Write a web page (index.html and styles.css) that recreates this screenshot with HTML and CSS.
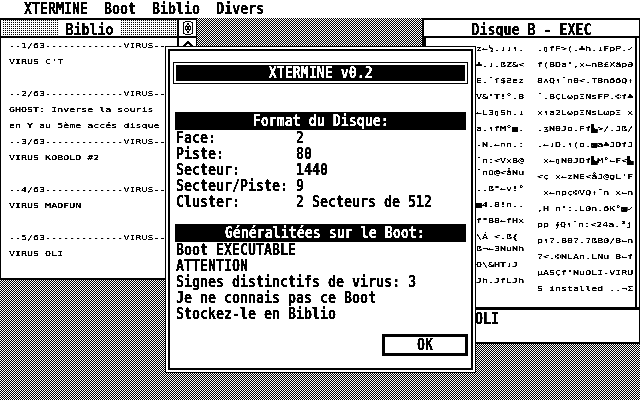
FILE: index.html
```html
<!DOCTYPE html>
<html lang="fr">
<head>
  <meta charset="UTF-8" />
  <title>XTERMINE v0.2</title>
  <link rel="stylesheet" href="styles.css">
</head>
<body>
  <div class="screen">
    <div class="menubar big">
      <span class="menu m-xtermine">XTERMINE</span>
      <span class="menu m-boot">Boot</span>
      <span class="menu m-biblio">Biblio</span>
      <span class="menu">Divers</span>
    </div>

    <div class="window biblio">
      <div class="titlebar">
        <div class="title-pattern"><div class="title-box big"><div class="line">Biblio</div></div></div>
        <div class="widget">
          <svg width="10" height="14" viewBox="0 0 10 14"><path d="M2 .5h6l1.500 1.500v10l-1.500 1.500h-6l-1.500-1.500v-10zM5 2.500l-3 4.500 3 4.500 3-4.500z" fill="none" stroke="#000"/><path d="M5 4.500l-1.500 2.500 1.500 2.500 1.500-2.500z" fill="#000"/></svg>
        </div>
      </div>
      <div class="biblio-body">
        <div class="list small">
          <div class="line">--1/63-------------VIRUS--</div>
          <div class="line">VIRUS C'T</div>
          <div class="line"> </div>
          <div class="line">--2/63-------------VIRUS--</div>
          <div class="line">GHOST: Inverse la souris</div>
          <div class="line">en Y au 5ème accés disque</div>
          <div class="line">--3/63-------------VIRUS--</div>
          <div class="line">VIRUS KOBOLD #2</div>
          <div class="line"> </div>
          <div class="line">--4/63-------------VIRUS--</div>
          <div class="line">VIRUS MADFUN</div>
          <div class="line"> </div>
          <div class="line">--5/63-------------VIRUS--</div>
          <div class="line">VIRUS OLI</div>
        </div>
        <div class="scrollbar">
          <svg width="10" height="6" viewBox="0 0 10 6"><path d="M.5 5.500l4.500-4.500 4.500 4.500" fill="none" stroke="#000" stroke-width="1.500"/></svg>
        </div>
      </div>
    </div>

    <div class="window disque">
      <div class="disque-title big"><div class="line">Disque B - EXEC</div></div>
      <div class="dump small">
        <div class="dump-left">
          <div class="line">z←½.↓↓↑.</div>
          <div class="line">♣.↓.ßZ&amp;&lt;</div>
          <div class="line">E.¯ſ$Ƨez</div>
          <div class="line">V&amp;'T!°.8</div>
          <div class="line">←L3▯Sh.↓</div>
          <div class="line">a.↑fM°▨.</div>
          <div class="line">-N.←▫n.:</div>
          <div class="line">¯n:&lt;VxB@</div>
          <div class="line rise">¯nü@&lt;åNu</div>
          <div class="line">..ß"←v!°</div>
          <div class="line">▨4.8!n..</div>
          <div class="line">f"B8←fHx</div>
          <div class="line">\Á &lt;.ß{</div>
          <div class="line rise">ß¬←3NuNh</div>
          <div class="line">O\&amp;HT↓J</div>
          <div class="line">Jh.JfLJh</div>
        </div>
        <div class="dump-right">
          <div class="line">.▯fF&gt;(.♣h.↓FpP.✓</div>
          <div class="line">f(BDa',x←nB£XäpƏ</div>
          <div class="line">8∧Q↑¯n0&lt;.T8n66Q↑</div>
          <div class="line">¯.BÇLωpΞNsFP.©f♣</div>
          <div class="line">x↑a2LωpΞNsLωpΞ x</div>
          <div class="line">.ʒN0Jo.Ff▙&gt;/.Jß/</div>
          <div class="line">.←↓D.↑(o.▨a♣JDfJ</div>
          <div class="line"> x←▯N0JDf▙M°←F&lt;▙</div>
          <div class="line">&lt;ç x←zNE&lt;åJ@gL'F</div>
          <div class="line"> x←npç©VQ↑¯n x←n</div>
          <div class="line">,H n':.L0n.6K°▨✓</div>
          <div class="line">pp ∮Q↑¯n:&lt;24a.³j</div>
          <div class="line">p↑?.B0?.?ßB0/8←n</div>
          <div class="line">?&lt;.©NLAn.LNu 8←f</div>
          <div class="line">µASÇf'NuOLI-VIRU</div>
          <div class="line">S installed ..¬Σ</div>
        </div>
      </div>
      <div class="status big"><div class="line">OLI</div></div>
    </div>

    <div class="dialog">
      <div class="dialog-inner big">
        <div class="app-title"><div class="app-title-bar"><div class="line">XTERMINE v0.2</div></div></div>
        <div class="section-bar first"><div class="line">Format du Disque:</div></div>
        <div class="fields">
          <div class="line">Face:</div><div class="line">2</div>
          <div class="line">Piste:</div><div class="line">80</div>
          <div class="line">Secteur:</div><div class="line">1440</div>
          <div class="line">Secteur/Piste:</div><div class="line">9</div>
          <div class="line">Cluster:</div><div class="line">2 Secteurs de 512</div>
        </div>
        <div class="section-bar second"><div class="line"> Généralitées sur le Boot:</div></div>
        <div class="info">
          <div class="line">Boot EXECUTABLE</div>
          <div class="line">ATTENTION</div>
          <div class="line">Signes distinctifs de virus: 3</div>
          <div class="line">Je ne connais pas ce Boot</div>
          <div class="line">Stockez-le en Biblio</div>
        </div>
        <div class="actions"><button class="ok big"><span class="line">OK</span></button></div>
      </div>
    </div>
  </div>
</body>
</html>
```

FILE: styles.css
```css
* {
  margin: 0;
  padding: 0;
  box-sizing: border-box;
}

html, body {
  width: 640px;
  height: 400px;
  overflow: hidden;
  background: #fff;
}

.screen {
  position: relative;
  width: 640px;
  height: 400px;
  overflow: hidden;
  color: #000;
  background-image: repeating-conic-gradient(#000 0 25%, #fff 0 50%);
  background-size: 2px 2px;
  filter: grayscale(1) brightness(0.75) contrast(10);
}

.line {
  white-space: pre;
}

/* system font: 8x16 cells, tall glyphs */
.big {
  font-family: "DejaVu Sans Mono", monospace;
  font-weight: bold;
  font-size: 13.3px;
  line-height: 16px;
}

.big .line, .menu {
  display: block;
  transform: scaleY(1.25);
}

/* small font: 6 px cells, flat glyphs */
.small {
  font-family: "DejaVu Sans Mono", monospace;
  font-size: 10px;
  line-height: 16px;
}

.small .line {
  height: 16px;
  transform: scaleY(0.72);
}

.menubar {
  display: flex;
  height: 18px;
  padding: 1px 0 0 24px;
  background: #fff;
}

.m-xtermine, .m-boot, .m-biblio {
  margin-right: 16px;
}

.window {
  position: absolute;
  top: 18px;
  background: #fff;
}

/* left window */
.biblio {
  left: 0;
  width: 197px;
  height: 262px;
  border: 1px solid #000;
  border-top-width: 2px;
  border-bottom-width: 2px;
  display: flex;
  flex-direction: column;
}

.titlebar {
  display: flex;
  height: 18px;
  border-bottom: 2px solid #000;
}

.title-pattern {
  flex: 1;
  display: flex;
  justify-content: center;
  margin-left: 1px;
  background-image: repeating-conic-gradient(#000 0 25%, #fff 0 100%);
  background-size: 2px 2px;
}

.title-box {
  width: 62px;
  padding-top: 2px;
  text-align: center;
  background: #fff;
}

.widget {
  width: 19px;
  border-left: 2px solid #000;
  display: flex;
  align-items: center;
  justify-content: center;
}

.biblio-body {
  flex: 1;
  display: flex;
  min-height: 0;
}

.list {
  flex: 1;
  overflow: hidden;
  padding-left: 8px;
}

.scrollbar {
  width: 19px;
  border-left: 2px solid #000;
  display: flex;
  justify-content: center;
  align-items: flex-start;
  padding-top: 3px;
}

/* right window */
.disque {
  left: 422px;
  width: 218px;
  height: 326px;
  border: 2px solid #000;
  border-right-width: 1px;
  display: flex;
  flex-direction: column;
}

.disque-title {
  height: 18px;
  padding-top: 2px;
  border-bottom: 2px solid #000;
  text-align: center;
}

.dump {
  flex: 1;
  min-height: 0;
  display: flex;
  gap: 10px;
  padding: 3px 0 0 50px;
  margin-right: 2px;
  border-right: 2px solid #000;
  border-left: 2px solid #000;
}

.dump-left {
  width: 52px;
  overflow: hidden;
}

.dump-left .rise {
  margin-top: -4px;
}

.dump-right {
  width: 100px;
  overflow: hidden;
}

.status {
  height: 35px;
  border-top: 3px solid #000;
  padding: 1px 0 0 51px;
}

/* dialog */
.dialog {
  position: absolute;
  left: 165px;
  top: 46px;
  width: 311px;
  height: 327px;
  padding: 2px;
  background: #fff;
  border: 1px solid #000;
}

.dialog-inner {
  height: 100%;
  padding: 11px 5px 0 5px;
  border: 2px solid #000;
}

.app-title {
  height: 22px;
  margin: 0 -2px;
  padding: 2px;
  border: 1px solid #000;
}

.app-title-bar {
  height: 16px;
  background: #000;
  color: #fff;
  text-align: center;
  text-shadow: 0.5px 0 #fff;
}

.section-bar {
  height: 18px;
  padding-top: 1px;
  background: #000;
  color: #fff;
  text-align: center;
  text-shadow: 0.5px 0 #fff;
}

.section-bar.first { margin-top: 28px; }
.section-bar.second { margin-top: 14px; }

.fields {
  display: grid;
  grid-template-columns: 120px 1fr;
  padding-left: 1px;
}

.info {
  padding-left: 1px;
}

.actions {
  display: flex;
  justify-content: flex-end;
  margin: 12px -2px 0 0;
}

.ok {
  width: 86px;
  height: 22px;
  border: 3px solid #000;
  background: #fff;
  color: #000;
}
```
